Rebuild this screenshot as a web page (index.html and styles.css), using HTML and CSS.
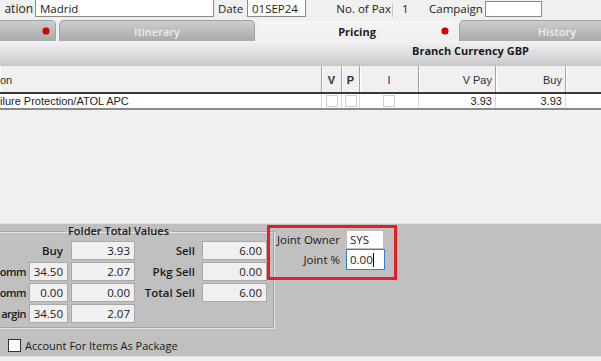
FILE: index.html
```html
<!DOCTYPE html>
<html lang="en">

<head>
    <meta charset="UTF-8">
    <meta name="viewport" content="width=device-width, initial-scale=1.0">
    <title>Pricing</title>
    <link rel="stylesheet" href="styles.css">
</head>

<body>
    <!-- folder header fields -->
    <div class="topbar">
        <span class="lbl lbl-dest">ation</span>
        <span class="field f-madrid">Madrid</span>
        <span class="lbl lbl-date">Date</span>
        <span class="field f-date">01SEP24</span>
        <span class="lbl lbl-pax">No. of Pax</span>
        <span class="sep"></span>
        <span class="lbl lbl-num">1</span>
        <span class="lbl lbl-camp">Campaign</span>
        <span class="field f-camp"></span>
    </div>

    <!-- tabs -->
    <div class="tabs">
        <div class="tab tab-first"><span class="dot"></span></div>
        <div class="tab">Itinerary</div>
        <div class="tab active">Pricing<span class="dot"></span></div>
        <div class="tab tab-last">History</div>
    </div>

    <div class="currency">Branch Currency GBP</div>

    <!-- pricing grid -->
    <div class="grid">
        <div class="grow head">
            <div class="cell c-desc">on</div>
            <div class="cell c-v bold">V</div>
            <div class="cell c-p bold">P</div>
            <div class="cell c-i">I</div>
            <div class="cell c-pay num">V Pay</div>
            <div class="cell c-buy num">Buy</div>
            <div class="cell c-rest"></div>
        </div>
        <div class="grow body">
            <div class="cell c-desc">ilure Protection/ATOL APC</div>
            <div class="cell c-v"><span class="chk"></span></div>
            <div class="cell c-p"><span class="chk"></span></div>
            <div class="cell c-i"><span class="chk"></span></div>
            <div class="cell c-pay num">3.93</div>
            <div class="cell c-buy num">3.93</div>
            <div class="cell c-rest"></div>
        </div>
    </div>

    <div class="blank"></div>

    <!-- totals panel -->
    <div class="panel">
        <div class="panel-left">
            <fieldset class="group">
                <legend>Folder Total Values</legend>
                <div class="totals">
                    <div class="tl span2">Buy</div>
                    <div class="tf wide">3.93</div>
                    <div class="tl2">Sell</div>
                    <div class="tf">6.00</div>

                    <div class="tl cut">omm</div>
                    <div class="tf small">34.50</div>
                    <div class="tf wide">2.07</div>
                    <div class="tl2">Pkg Sell</div>
                    <div class="tf">0.00</div>

                    <div class="tl cut">omm</div>
                    <div class="tf small">0.00</div>
                    <div class="tf wide">0.00</div>
                    <div class="tl2">Total Sell</div>
                    <div class="tf">6.00</div>

                    <div class="tl cut">argin</div>
                    <div class="tf small">34.50</div>
                    <div class="tf wide">2.07</div>
                </div>
            </fieldset>

            <label class="check-row">
                <span class="box"></span>
                <span class="check-text">Account For Items As Package</span>
            </label>
        </div>

        <div class="joint">
            <div class="jrow">
                <span class="jl">Joint Owner</span>
                <span class="jf">SYS</span>
            </div>
            <div class="jrow">
                <span class="jl">Joint %</span>
                <span class="jf focus">0.00<i class="caret"></i></span>
            </div>
        </div>
    </div>
</body>

</html>
```

FILE: styles.css
```css
* {
    box-sizing: border-box;
}

body {
    margin: 0;
    width: 601px;
    height: 361px;
    overflow: hidden;
    background-color: #f0f0f0;
    color: #1b1b1b;
    font-family: "Open Sans", "Noto Sans", sans-serif;
    font-size: 11px;
}

/* 顶部字段 */
.topbar {
    display: flex;
    height: 20px;
    align-items: flex-start;
    background-color: #f0f0f0;
}

.lbl {
    display: flex;
    height: 17px;
    align-items: center;
    font-size: 11.5px;
    white-space: nowrap;
}

.lbl-dest {
    width: 35px;
    padding-right: 2px;
    justify-content: flex-end;
    font-size: 12px;
}

.lbl-date {
    width: 33px;
    padding-left: 4px;
}

.lbl-pax {
    width: 86px;
    padding-right: 1px;
    justify-content: flex-end;
}

.lbl-num {
    width: 36px;
    padding-left: 9px;
}

.lbl-camp {
    width: 56px;
}

.sep {
    width: 1px;
    height: 14px;
    margin-top: 3px;
    background-color: #c4c4c4;
}

.field {
    display: flex;
    align-items: center;
    height: 18px;
    margin-top: -1px;
    padding-left: 4px;
    background-color: #fff;
    border: 1px solid #8a8a8a;
    font-size: 11.5px;
}

.f-madrid {
    width: 179px;
}

.f-date {
    width: 59px;
}

.f-camp {
    width: 57px;
    height: 16px;
    margin-top: 1px;
}

/* 标签页 */
.tabs {
    display: flex;
    gap: 3px;
    height: 21px;
    overflow: hidden;
}

.tab {
    position: relative;
    display: flex;
    flex: none;
    width: 196px;
    align-items: center;
    justify-content: center;
    border: 1px solid #a2a2a2;
    border-bottom: none;
    border-radius: 5px 5px 0 0;
    background: linear-gradient(#cdcdcd, #a9a9a9);
    color: #ececec;
    font-weight: 600;
}

.tab-first {
    margin-left: -6px;
    width: 62px;
}

.tab.active {
    width: 198px;
    border-color: #f0f0f0;
    background: linear-gradient(#f6f6f6, #eeeeee);
    color: #1b1b1b;
    font-weight: 700;
}

.tab-last {
    width: 196px;
}

.dot {
    position: absolute;
    right: 6px;
    top: 7px;
    width: 6px;
    height: 6px;
    border-radius: 50%;
    background-color: #e00000;
    box-shadow: 0 0 0 0.5px #900;
}

.tab.active .dot {
    right: 7px;
}

.currency {
    height: 26px;
    padding: 2px 0 0 340px;
    text-align: center;
    background: linear-gradient(#f2f2f2, #dadada 60%, #c6c6c6);
    border-bottom: 1px solid #b4b4b4;
    font-weight: 700;
    font-size: 11px;
}

/* 表格 */
.grid {
    font-family: "Liberation Sans", Arial, sans-serif;
    font-size: 11px;
}

.grow {
    display: flex;
}

.grow.head {
    height: 28px;
    background-color: #f0f0f0;
    border-bottom: 2px solid #383838;
    margin-top: -1px;
}

.grow.body {
    height: 16px;
    background-color: #fff;
    border-bottom: 2px solid #8a8a8a;
}

.cell {
    display: flex;
    align-items: center;
    flex: none;
    border-right: 1px solid #a4a4a4;
    box-shadow: inset 1px 0 #fff;
    white-space: nowrap;
}

.head .cell {
    color: #2e2e3e;
    padding-top: 1px;
}

.body .cell {
    border-right-color: #d8d8d8;
    box-shadow: none;
}

.c-desc {
    width: 322px;
}

.c-v {
    width: 20px;
    justify-content: center;
}

.c-p {
    width: 18px;
    justify-content: center;
}

.c-i {
    width: 59px;
    justify-content: center;
}

.c-pay {
    width: 77px;
}

.c-buy {
    width: 70px;
}

.c-rest {
    width: 35px;
    border-right: none;
}

.num {
    justify-content: flex-end;
    padding-right: 3px;
}

.bold {
    font-weight: 700;
}

.chk {
    width: 12px;
    height: 12px;
    border: 1px solid #cfcfcf;
    background-color: #fff;
}

.blank {
    height: 113px;
}

/* 底部面板 */
.panel {
    display: flex;
    align-items: flex-start;
    height: 134px;
    background-color: #c0c0c0;
    border-top: 1px solid #e2e2e2;
    border-bottom: 1px solid #e2e2e2;
}

.panel-left {
    display: flex;
    flex-direction: column;
}

.group {
    width: 284px;
    margin: 0 0 0 -10px;
    padding: 0 6px 4px 0;
    border: 1px solid #a4a4a4;
    box-shadow: inset 1px 1px #e4e4e4, 1px 1px #e4e4e4;
}

.group legend {
    margin-left: 74px;
    padding: 0 3px;
    line-height: 14px;
    font-weight: 600;
    font-size: 11px;
}

.totals {
    display: grid;
    grid-template-columns: 38px 39px 67px 67px 65px;
    grid-auto-rows: 19px;
    row-gap: 2px;
    margin-top: 3px;
    font-size: 11.5px;
}

.tl,
.tl2 {
    display: flex;
    align-items: center;
    justify-content: flex-end;
    font-weight: 600;
    white-space: nowrap;
}

.tl {
    padding-right: 4px;
}

.tl.cut {
    padding-right: 3px;
    font-size: 11px;
    letter-spacing: -0.5px;
}

.tl.span2 {
    grid-column: span 2;
    padding-right: 5px;
}

.tl2 {
    padding-right: 7px;
}

.tf {
    display: flex;
    align-items: center;
    justify-content: flex-end;
    padding-right: 4px;
    background-color: #f0f0f0;
    border: 1px solid #a8a8a8;
}

.tf.wide {
    margin-left: 3px;
}

.check-row {
    display: flex;
    align-items: center;
    margin-top: 10px;
    padding-left: 8px;
    white-space: nowrap;
    font-size: 11px;
}

.box {
    flex: none;
    width: 13px;
    height: 13px;
    margin-right: 4px;
    background-color: #fff;
    border: 1px solid #333;
}

/* 联合负责人 */
.joint {
    display: flex;
    flex-direction: column;
    margin: 4px 0 0 -4px;
    padding: 2px 9px 7px 6px;
    outline: 3px solid #e41e26;
}

.jrow {
    display: flex;
    align-items: center;
}

.jl {
    width: 70px;
    padding-right: 6px;
    text-align: right;
    font-size: 11.5px;
}

.jf {
    display: flex;
    align-items: center;
    width: 38px;
    height: 19px;
    padding-left: 3px;
    background-color: #fff;
    border: 1px solid #bdbdbd;
    font-size: 11.5px;
}

.jf.focus {
    width: 39px;
    height: 21px;
    border-color: #2f7fd6;
}

.caret {
    display: inline-block;
    width: 1px;
    height: 14px;
    background-color: #000;
}
```
